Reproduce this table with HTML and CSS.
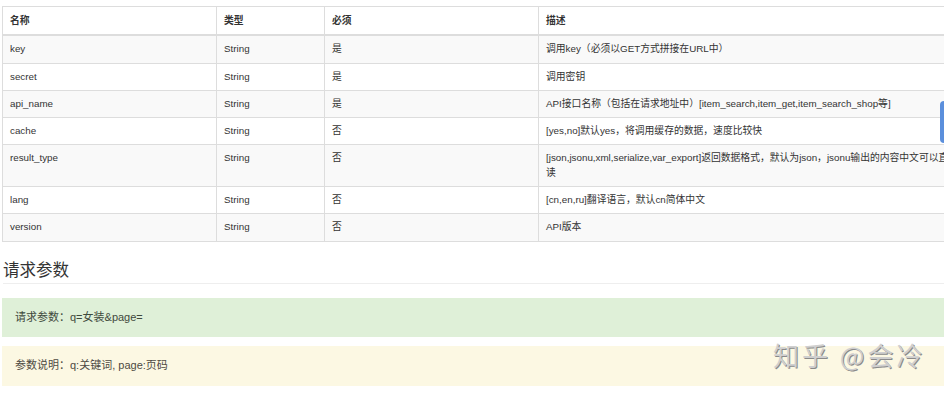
FILE: index.html
```html
<!DOCTYPE html>
<html lang="zh-CN">
<head>
<meta charset="utf-8">
<title>API</title>
<link rel="stylesheet" href="styles.css">
</head>
<body>
<div class="page">
  <table class="params">
    <colgroup>
      <col class="c1"><col class="c2"><col class="c3"><col>
    </colgroup>
    <thead>
      <tr><th>名称</th><th>类型</th><th>必须</th><th>描述</th></tr>
    </thead>
    <tbody>
      <tr><td>key</td><td>String</td><td>是</td><td>调用key（必须以GET方式拼接在URL中）</td></tr>
      <tr><td>secret</td><td>String</td><td>是</td><td>调用密钥</td></tr>
      <tr><td>api_name</td><td>String</td><td>是</td><td>API接口名称（包括在请求地址中）[item_search,item_get,item_search_shop等]</td></tr>
      <tr><td>cache</td><td>String</td><td>否</td><td>[yes,no]默认yes，将调用缓存的数据，速度比较快</td></tr>
      <tr><td>result_type</td><td>String</td><td>否</td><td>[json,jsonu,xml,serialize,var_export]返回数据格式，默认为json，jsonu输出的内容中文可以直接阅读</td></tr>
      <tr><td>lang</td><td>String</td><td>否</td><td>[cn,en,ru]翻译语言，默认cn简体中文</td></tr>
      <tr><td>version</td><td>String</td><td>否</td><td>API版本</td></tr>
    </tbody>
  </table>
  <h2 class="section-title">请求参数</h2>
  <div class="alert alert-success">请求参数：q=女装&amp;page=</div>
  <div class="alert alert-warning">参数说明：q:关键词, page:页码</div>
</div>
<div class="side-tab"></div>
<div class="watermark">知乎 @会冷</div>
</body>
</html>
```

FILE: styles.css
```css
html, body {
  margin: 0;
  padding: 0;
  overflow: hidden;
  background: #fff;
}
body {
  font-family: "Liberation Sans", Arial, "Noto Sans CJK SC", sans-serif;
  color: #333;
  width: 944px;
  height: 393px;
  position: relative;
}
.page {
  width: 975px;
  padding: 6px 0 0 2px;
}
.params {
  width: 100%;
  border-collapse: collapse;
  table-layout: fixed;
  font-size: 9.8px;
  line-height: 14.3px;
  border: 1px solid #ddd;
}
.params col.c1 { width: 214px; }
.params col.c2 { width: 108px; }
.params col.c3 { width: 214px; }
.params th, .params td {
  text-align: left;
  vertical-align: top;
  padding: 6px 7px;
  border: 1px solid #ddd;
}
.params th {
  font-weight: bold;
  padding-top: 7px;
  border-bottom: 2px solid #ddd;
}
.params tbody tr:nth-child(odd) {
  background: #f9f9f9;
}
.section-title {
  margin: 17px 0 0 1px;
  padding-bottom: 2px;
  font-size: 16.5px;
  font-weight: normal;
  line-height: 22px;
  color: #333;
  border-bottom: 1px solid #eee;
}
.alert {
  font-size: 11px;
  line-height: 15px;
  padding: 12px 13px;
}
.alert-success {
  margin-top: 14px;
  background: #dff0d8;
  color: #3f4a3d;
}
.alert-warning {
  margin-top: 9px;
  height: 16px;
  background: #fcf8e3;
  color: #4e4a42;
}
.side-tab {
  position: absolute;
  right: 0;
  top: 101px;
  width: 4px;
  height: 42px;
  background: #5b8fdc;
  border-radius: 4px 0 0 4px;
}
.watermark {
  position: absolute;
  left: 773px;
  top: 339px;
  font-family: "Noto Sans CJK SC", sans-serif;
  font-size: 26px;
  line-height: 32px;
  color: #cfcfcf;
  text-shadow: 1px 1px 0 #8a8a8a;
  letter-spacing: 3px;
}
```
